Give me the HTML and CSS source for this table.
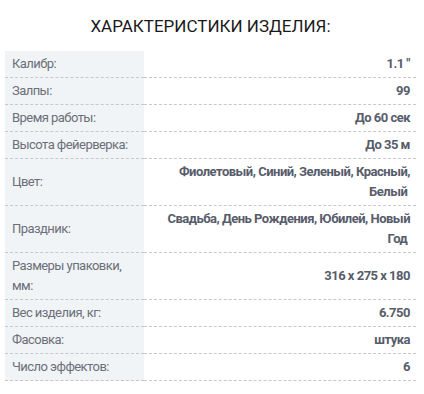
FILE: index.html
```html
<!DOCTYPE html>
<html lang="ru">
<head>
<meta charset="utf-8">
<link rel="stylesheet" href="styles.css">
</head>
<body>
<div class="specs">
  <h2 class="specs-title">ХАРАКТЕРИСТИКИ ИЗДЕЛИЯ:</h2>
  <table class="specs-table">
    <tr><td class="k">Калибр:</td><td class="v">1.1 "</td></tr>
    <tr><td class="k">Залпы:</td><td class="v">99</td></tr>
    <tr><td class="k">Время работы:</td><td class="v">До 60 сек</td></tr>
    <tr><td class="k">Высота фейерверка:</td><td class="v">До 35 м</td></tr>
    <tr><td class="k">Цвет:</td><td class="v">Фиолетовый, Синий, Зеленый, Красный, Белый&nbsp;</td></tr>
    <tr><td class="k">Праздник:</td><td class="v">Свадьба, День Рождения, Юбилей, Новый Год&nbsp;</td></tr>
    <tr><td class="k">Размеры упаковки, мм:</td><td class="v">316 x 275 x 180</td></tr>
    <tr><td class="k">Вес изделия, кг:</td><td class="v">6.750</td></tr>
    <tr><td class="k">Фасовка:</td><td class="v">штука</td></tr>
    <tr><td class="k">Число эффектов:</td><td class="v">6</td></tr>
  </table>
</div>
</body>
</html>
```
FILE: styles.css
```css
html, body {
  margin: 0;
  padding: 0;
  background: #fff;
}
body {
  font-family: Roboto, "Liberation Sans", sans-serif;
}
.specs {
  margin: 0 8px 0 5px;
  padding-top: 16px;
}
.specs-title {
  margin: 0 0 15px;
  font-size: 17px;
  line-height: 20px;
  font-weight: 400;
  color: #1a1a1a;
  text-align: center;
}
.specs-table {
  width: 100%;
  border-collapse: collapse;
  font-size: 13px;
  line-height: 20px;
}
.specs-table td {
  padding: 3px 6px 3px 7px;
  border-bottom: 1px dashed #c8c8c8;
  vertical-align: middle;
}
.specs-table .k {
  width: 126px;
  background: #f1f4f7;
  color: #6b6f78;
  letter-spacing: -0.55px;
}
.specs-table .v {
  text-align: right;
  font-weight: 700;
  color: #575c6b;
  letter-spacing: -0.5px;
}
```
